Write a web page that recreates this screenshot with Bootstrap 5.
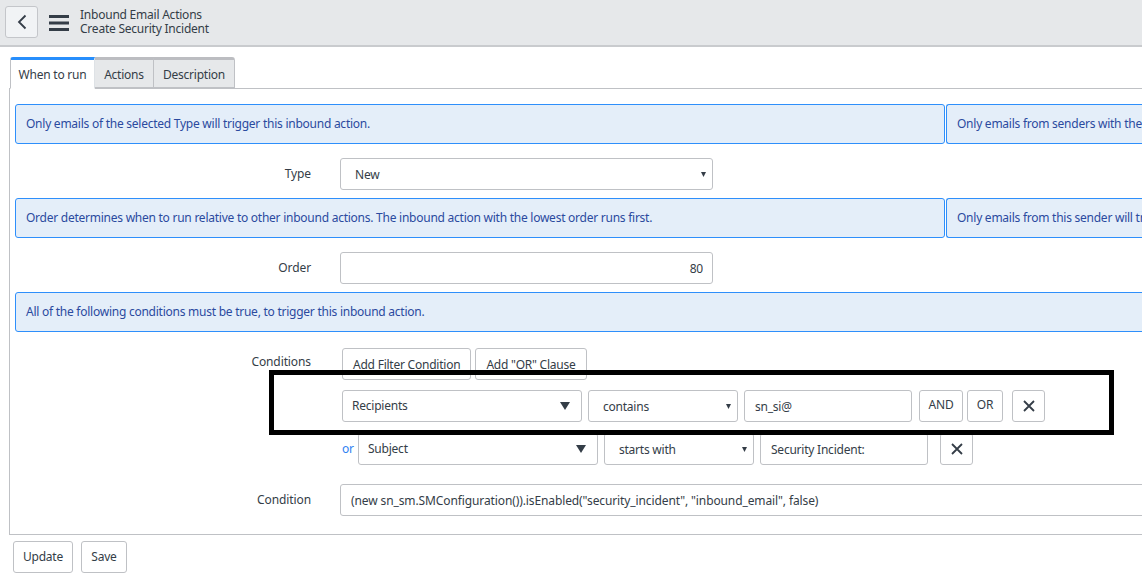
<!DOCTYPE html>
<html lang="en"><head><meta charset="utf-8"><title>Inbound Email Actions</title>
<link href="https://cdn.jsdelivr.net/npm/bootstrap@5.3.0/dist/css/bootstrap.min.css" rel="stylesheet">
<style>
html,body{width:1142px;height:581px;overflow:hidden}
body{background:#fff;color:#343d47;font-family:"Noto Sans","Liberation Sans",sans-serif;font-size:12px;letter-spacing:-.23px}
.topbar{height:47px;background:#e6e8ea;border-bottom:2px solid #c9cbce;padding-left:5px}
.backbtn{width:33px;height:32px;background:#f1f3f5;border:1px solid #c4c6ca;border-radius:3px;padding:0;margin-top:-2px}
.burger{margin-left:11px;margin-right:11px}
.title-block{line-height:14px;margin-top:-1px}
.tabzone{padding:10px 0 0 9px;width:1200px}
.tabzone .nav-tabs{border-bottom:1px solid #bfc1c5;padding-left:1px;height:32px;--bs-nav-tabs-border-radius:0}
.tabzone .nav-link{height:31px;padding:0;margin:0;border:1px solid #bfc1c5;border-top:3px solid #bcbdc1;border-left:0;border-radius:0;background:#e6e8ea;color:#343d47;text-align:center;line-height:29px;font-size:12px}
.tabzone .nav-link.active{height:32px;background:#fff;border-top-color:#278efc;border-bottom-color:#fff;border-left:1px solid #bfc1c5;color:#343d47;border-top-left-radius:3px}
.tab-a{width:85px}.tab-b{width:59px}.tab-c{width:81px;border-top-right-radius:3px!important}
.panelbox{height:446px;border-left:1px solid #bfc1c5;border-bottom:1px solid #bfc1c5;padding:15px 0 0 5px}
.hintrow{height:40px;gap:1px;overflow:hidden}
.hint{flex:0 0 930px;height:40px;margin:0;padding:0 10px;background:#e4eef9;border:1px solid #2e8ffb;border-radius:3px;color:#2b4a9f;line-height:37px;white-space:nowrap;letter-spacing:-.25px;--bs-alert-border-radius:3px}
.hint-wide{flex:0 0 400px;border-right:0}
.hint-full{flex:0 0 1200px}
.fieldrow{height:32px;margin-top:14px}
.lbl{width:296px;flex:none;text-align:right;margin-right:29px;padding-top:7px;letter-spacing:-.1px}
.fld{height:32px;border:1px solid #bfc1c5;border-radius:3px;font-size:12px;color:#343d47;background-color:#fff;padding:0 10px;box-shadow:none;letter-spacing:-.23px}
.wide{width:373px;flex:none}
.numeric{text-align:right;padding-top:1px;padding-right:9px}
.form-select.fld{background-size:7px 5px;background-position:right 5px center;padding:1px 10px 0 14px}
.selectsmall{background-image:url("data:image/svg+xml,%3Csvg xmlns='http://www.w3.org/2000/svg' viewBox='0 0 8 6'%3E%3Cpath fill='%23343d47' d='M1 0h6L4 6z'/%3E%3C/svg%3E")}
.form-select.selectlarge{background-image:url("data:image/svg+xml,%3Csvg xmlns='http://www.w3.org/2000/svg' viewBox='0 0 10 8'%3E%3Cpath fill='%23343d47' d='M0 0h10L5 8z'/%3E%3C/svg%3E");background-size:10px 8px;background-position:right 11px center;padding:0 10px 0 9px}
.act{height:32px;padding:0 9px;border:1px solid #bfc1c5;border-radius:3px;background:#fff;color:#343d47;font-size:12px;letter-spacing:-.23px;line-height:1}
.condzone{position:relative}
.condlabel{width:296px;flex:none;text-align:right;margin-right:31px;padding-top:5px;letter-spacing:-.1px}
.f-field{width:240px;flex:none}
.f-op{width:150px;flex:none;margin-left:6px}
.f-val{width:168px;flex:none;margin-left:6px;padding-top:1px}
.xbtn{width:33px;height:32px;padding:0;display:flex;align-items:center;justify-content:center}
.orword{width:16px;flex:none;color:#2f82f2;line-height:32px}
.blackframe{position:absolute;left:254px;top:22px;width:845px;height:65px;border:5px solid #000;pointer-events:none}
.savebar{padding:6px 0 0 13px;gap:8px}
.save-btn{width:46px;padding:0}
.filter-a{height:32px}
.filter-a .act{padding:1px 10px 0}
.filter-b{margin-top:10px}
.filter-b .act:not(.xbtn){padding:0 0 2px;text-align:center}
.and-btn{width:44px;margin-left:7px}
.or-btn{width:36px}
.filter-c{margin-top:11px}
.x-gap-a{margin-left:9px}
.filter-x{margin-left:12px}
.condition-row{margin-top:19px;height:32px}
.condition-input{width:820px;flex:none;padding-top:1px;letter-spacing:-.11px}
</style></head>
<body>
<header class="topbar d-flex align-items-center">
  <button class="backbtn d-flex align-items-center justify-content-center" aria-label="Back"><svg width="10" height="16" viewBox="0 0 10 16"><path d="M8.5 1.5 2 8l6.5 6.5" fill="none" stroke="#343d47" stroke-width="1.8"/></svg></button>
  <svg class="burger" width="20" height="16" viewBox="0 0 20 16"><path d="M0 0h20v3H0zM0 6.5h20v3H0zM0 13h20v3H0z" fill="#343d47"/></svg>
  <div class="title-block"><div>Inbound Email Actions</div><div>Create Security Incident</div></div>
</header>
<div class="tabzone">
  <ul class="nav nav-tabs">
    <li class="nav-item"><a class="nav-link active tab-a" href="#">When to run</a></li>
    <li class="nav-item"><a class="nav-link tab-b" href="#">Actions</a></li>
    <li class="nav-item"><a class="nav-link tab-c" href="#">Description</a></li>
  </ul>
  <div class="panelbox">
    <div class="d-flex hintrow">
      <div class="alert hint">Only emails of the selected Type will trigger this inbound action.</div>
      <div class="alert hint hint-wide">Only emails from senders with the selected roles will trigger</div>
    </div>
    <div class="d-flex fieldrow"><label class="lbl">Type</label><select class="form-select fld wide selectsmall"><option>New</option></select></div>
    <div class="d-flex hintrow mt-2">
      <div class="alert hint">Order determines when to run relative to other inbound actions. The inbound action with the lowest order runs first.</div>
      <div class="alert hint hint-wide">Only emails from this sender will trigger this inbound action.</div>
    </div>
    <div class="d-flex fieldrow"><label class="lbl">Order</label><input class="form-control fld wide numeric" value="80"></div>
    <div class="d-flex hintrow mt-2"><div class="alert hint hint-full">All of the following conditions must be true, to trigger this inbound action.</div></div>
    <div class="condzone">
      <div class="d-flex filter-a mt-3">
        <div class="condlabel">Conditions</div>
        <div class="d-flex gap-1"><button class="act">Add Filter Condition</button><button class="act">Add "OR" Clause</button></div>
      </div>
      <div class="d-flex filter-b">
        <div class="condlabel"></div>
        <select class="form-select fld f-field selectlarge"><option>Recipients</option></select>
        <select class="form-select fld f-op selectsmall"><option>contains</option></select>
        <input class="form-control fld f-val" value="sn_si@">
        <button class="act and-btn">AND</button><button class="act or-btn ms-1">OR</button>
        <button class="act xbtn x-gap-a" aria-label="Delete"><svg width="12" height="12" viewBox="0 0 12 12"><path d="m1 1 10 10M11 1 1 11" stroke="#343d47" stroke-width="1.8"/></svg></button>
      </div>
      <div class="d-flex filter-c">
        <div class="condlabel"></div>
        <span class="orword">or</span>
        <select class="form-select fld f-field selectlarge"><option>Subject</option></select>
        <select class="form-select fld f-op selectsmall"><option>starts with</option></select>
        <input class="form-control fld f-val" value="Security Incident:">
        <button class="act xbtn filter-x" aria-label="Delete"><svg width="12" height="12" viewBox="0 0 12 12"><path d="m1 1 10 10M11 1 1 11" stroke="#343d47" stroke-width="1.8"/></svg></button>
      </div>
      <div class="blackframe"></div>
    </div>
    <div class="d-flex condition-row"><label class="lbl">Condition</label><input class="form-control fld condition-input" value='(new sn_sm.SMConfiguration()).isEnabled("security_incident", "inbound_email", false)'></div>
  </div>
</div>
<div class="d-flex savebar"><button class="act">Update</button><button class="act save-btn">Save</button></div>
</body></html>
